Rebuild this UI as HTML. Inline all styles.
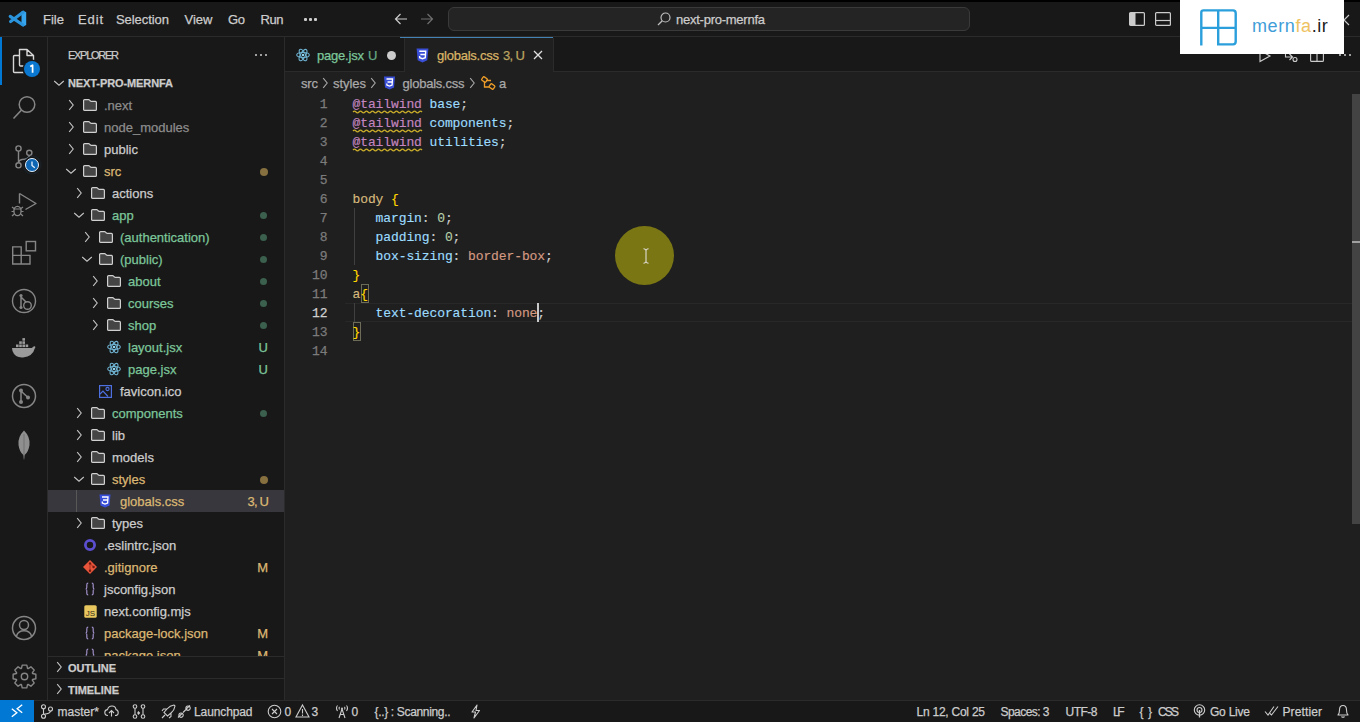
<!DOCTYPE html>
<html><head><meta charset="utf-8">
<style>
*{box-sizing:border-box;margin:0;padding:0}
html,body{width:1360px;height:722px;overflow:hidden;background:#1f1f1f;font-family:"Liberation Sans",sans-serif;font-size:13px;color:#cccccc;position:relative}
.a{position:absolute}
.t{position:absolute;white-space:pre;line-height:1;-webkit-text-stroke:0.25px currentColor}
svg{overflow:visible}
</style></head><body>
<div class="a" style="left:0px;top:0px;width:1360px;height:2px;background:#000;"></div>
<div class="a" style="left:0px;top:2px;width:1360px;height:34px;background:#181818;"></div>
<div class="a" style="left:0px;top:36px;width:1360px;height:1px;background:#2b2b2b;"></div>
<div class="a" style="left:0px;top:37px;width:47px;height:663px;background:#181818;"></div>
<div class="a" style="left:47px;top:37px;width:1px;height:663px;background:#2b2b2b;"></div>
<div class="a" style="left:48px;top:37px;width:236px;height:663px;background:#181818;"></div>
<div class="a" style="left:284px;top:37px;width:1px;height:663px;background:#2b2b2b;"></div>
<div class="a" style="left:285px;top:37px;width:1075px;height:34px;background:#181818;"></div>
<div class="a" style="left:285px;top:71px;width:1075px;height:1px;background:#2b2b2b;"></div>
<div class="a" style="left:285px;top:72px;width:1075px;height:628px;background:#1f1f1f;"></div>
<div class="a" style="left:0px;top:700px;width:1360px;height:22px;background:#181818;"></div>
<div class="a" style="left:0px;top:700px;width:1360px;height:1px;background:#2b2b2b;"></div>
<div class="t" style="left:43.00px;top:13.00px;font-size:13px;color:#cccccc;letter-spacing:0.016px;">File</div>
<div class="t" style="left:78.00px;top:13.00px;font-size:13px;color:#cccccc;letter-spacing:0.865px;">Edit</div>
<div class="t" style="left:116.00px;top:13.00px;font-size:13px;color:#cccccc;letter-spacing:-0.061px;">Selection</div>
<div class="t" style="left:184.50px;top:13.00px;font-size:13px;color:#cccccc;letter-spacing:0.016px;">View</div>
<div class="t" style="left:228.00px;top:13.00px;font-size:13px;color:#cccccc;letter-spacing:-0.344px;">Go</div>
<div class="t" style="left:260.50px;top:13.00px;font-size:13px;color:#cccccc;letter-spacing:-0.430px;">Run</div>
<svg class="a" style="left:0px;top:0px;" width="32" height="32" viewBox="0 0 32 32"><path d="M21.5,11.6 L23.3,10.8 L26.2,12.2 V25 L23.3,26.5 L21.5,25.6 Z" fill="#36a5ee"/><path d="M23,12.2 L10.6,21.6 M23,25 L10.2,16.4" stroke="#2a95dc" stroke-width="3.1" stroke-linecap="round"/></svg>
<div class="a" style="left:304px;top:18px;width:2.5px;height:2.5px;background:#cccccc;border-radius:1px"></div>
<div class="a" style="left:309px;top:18px;width:2.5px;height:2.5px;background:#cccccc;border-radius:1px"></div>
<div class="a" style="left:314px;top:18px;width:2.5px;height:2.5px;background:#cccccc;border-radius:1px"></div>
<svg class="a" style="left:394px;top:13px;" width="14" height="12" viewBox="0 0 14 12"><path d="M13,6 H1.5 M6.5,1 L1.5,6 L6.5,11" fill="none" stroke="#cccccc" stroke-width="1.2"/></svg>
<svg class="a" style="left:420px;top:13px;" width="14" height="12" viewBox="0 0 14 12"><path d="M1,6 H12.5 M7.5,1 L12.5,6 L7.5,11" fill="none" stroke="#6f6f6f" stroke-width="1.2"/></svg>
<div class="a" style="left:448px;top:7px;width:522px;height:24px;background:#242424;border:1px solid #3a3a3a;border-radius:6px"></div>
<svg class="a" style="left:657px;top:12px;" width="14" height="14" viewBox="0 0 14 14"><circle cx="8.5" cy="5.5" r="4.5" fill="none" stroke="#bdbdbd" stroke-width="1.2"/><path d="M5.3,8.7 L1,13" stroke="#bdbdbd" stroke-width="1.3"/></svg>
<div class="t" style="left:676.00px;top:13.00px;font-size:13px;color:#cccccc;letter-spacing:-0.249px;">next-pro-mernfa</div>
<svg class="a" style="left:1129px;top:12px;" width="16" height="14" viewBox="0 0 16 14"><rect x="0.6" y="0.6" width="14.8" height="12.8" rx="1" fill="none" stroke="#cccccc" stroke-width="1.2"/><rect x="1" y="1" width="5.5" height="12" fill="#cccccc"/></svg>
<svg class="a" style="left:1155px;top:12px;" width="16" height="14" viewBox="0 0 16 14"><rect x="0.6" y="0.6" width="14.8" height="12.8" rx="1" fill="none" stroke="#cccccc" stroke-width="1.2"/><path d="M1,8.5 H15" stroke="#cccccc" stroke-width="1.2"/></svg>
<svg class="a" style="left:1338px;top:14px;" width="11" height="11" viewBox="0 0 11 11"><path d="M1,1 L11,11 M11,1 L1,11" stroke="#cccccc" stroke-width="1.1"/></svg>
<div class="t" style="left:68.00px;top:50.19px;font-size:11px;color:#cccccc;letter-spacing:-1.275px;">EXPLORER</div>
<div class="a" style="left:255px;top:54px;width:2px;height:2px;background:#cccccc;border-radius:1px"></div>
<div class="a" style="left:260px;top:54px;width:2px;height:2px;background:#cccccc;border-radius:1px"></div>
<div class="a" style="left:265px;top:54px;width:2px;height:2px;background:#cccccc;border-radius:1px"></div>
<svg class="a" style="left:53px;top:79px;" width="12" height="8" viewBox="0 0 12 8"><path d="M1.2,2 L6,6.2 L10.8,2" fill="none" stroke="#c5c5c5" stroke-width="1.1"/></svg>
<div class="t" style="left:68.00px;top:78.19px;font-size:11px;color:#cccccc;letter-spacing:-0.096px;font-weight:700;">NEXT-PRO-MERNFA</div>
<svg class="a" style="left:67px;top:99px;" width="8" height="12" viewBox="0 0 8 12"><path d="M2.2,1.2 L6.2,6 L2.2,10.8" fill="none" stroke="#c5c5c5" stroke-width="1.1"/></svg>
<svg class="a" style="left:83px;top:99px;" width="14" height="12" viewBox="0 0 14 12"><path d="M0.6,1.6 Q0.6,0.6 1.6,0.6 H5.6 Q6.2,0.6 6.6,1.1 L7.4,2 Q7.7,2.4 8.3,2.4 H12.4 Q13.4,2.4 13.4,3.4 V10.4 Q13.4,11.4 12.4,11.4 H1.6 Q0.6,11.4 0.6,10.4 Z" fill="#454545" stroke="#d0d0d0" stroke-width="1.2"/></svg>
<div class="t" style="left:104.00px;top:99.00px;font-size:13px;color:#8c8c8c;">.next</div>
<svg class="a" style="left:67px;top:121px;" width="8" height="12" viewBox="0 0 8 12"><path d="M2.2,1.2 L6.2,6 L2.2,10.8" fill="none" stroke="#c5c5c5" stroke-width="1.1"/></svg>
<svg class="a" style="left:83px;top:121px;" width="14" height="12" viewBox="0 0 14 12"><path d="M0.6,1.6 Q0.6,0.6 1.6,0.6 H5.6 Q6.2,0.6 6.6,1.1 L7.4,2 Q7.7,2.4 8.3,2.4 H12.4 Q13.4,2.4 13.4,3.4 V10.4 Q13.4,11.4 12.4,11.4 H1.6 Q0.6,11.4 0.6,10.4 Z" fill="#454545" stroke="#d0d0d0" stroke-width="1.2"/></svg>
<div class="t" style="left:104.00px;top:121.00px;font-size:13px;color:#8c8c8c;">node_modules</div>
<svg class="a" style="left:67px;top:143px;" width="8" height="12" viewBox="0 0 8 12"><path d="M2.2,1.2 L6.2,6 L2.2,10.8" fill="none" stroke="#c5c5c5" stroke-width="1.1"/></svg>
<svg class="a" style="left:83px;top:143px;" width="14" height="12" viewBox="0 0 14 12"><path d="M0.6,1.6 Q0.6,0.6 1.6,0.6 H5.6 Q6.2,0.6 6.6,1.1 L7.4,2 Q7.7,2.4 8.3,2.4 H12.4 Q13.4,2.4 13.4,3.4 V10.4 Q13.4,11.4 12.4,11.4 H1.6 Q0.6,11.4 0.6,10.4 Z" fill="#454545" stroke="#d0d0d0" stroke-width="1.2"/></svg>
<div class="t" style="left:104.00px;top:143.00px;font-size:13px;color:#cccccc;">public</div>
<svg class="a" style="left:65px;top:167px;" width="12" height="8" viewBox="0 0 12 8"><path d="M1.2,2 L6,6.2 L10.8,2" fill="none" stroke="#c5c5c5" stroke-width="1.1"/></svg>
<svg class="a" style="left:83px;top:165px;" width="14" height="12" viewBox="0 0 14 12"><path d="M0.6,1.6 Q0.6,0.6 1.6,0.6 H5.6 Q6.2,0.6 6.6,1.1 L7.4,2 Q7.7,2.4 8.3,2.4 H12.4 Q13.4,2.4 13.4,3.4 V10.4 Q13.4,11.4 12.4,11.4 H1.6 Q0.6,11.4 0.6,10.4 Z" fill="#454545" stroke="#d0d0d0" stroke-width="1.2"/></svg>
<div class="t" style="left:104.00px;top:165.00px;font-size:13px;color:#dbb773;">src</div>
<div class="a" style="left:259.5px;top:167.5px;width:8px;height:8px;background:#86703f;border-radius:50%"></div>
<svg class="a" style="left:75px;top:187px;" width="8" height="12" viewBox="0 0 8 12"><path d="M2.2,1.2 L6.2,6 L2.2,10.8" fill="none" stroke="#c5c5c5" stroke-width="1.1"/></svg>
<svg class="a" style="left:91px;top:187px;" width="14" height="12" viewBox="0 0 14 12"><path d="M0.6,1.6 Q0.6,0.6 1.6,0.6 H5.6 Q6.2,0.6 6.6,1.1 L7.4,2 Q7.7,2.4 8.3,2.4 H12.4 Q13.4,2.4 13.4,3.4 V10.4 Q13.4,11.4 12.4,11.4 H1.6 Q0.6,11.4 0.6,10.4 Z" fill="#454545" stroke="#d0d0d0" stroke-width="1.2"/></svg>
<div class="t" style="left:112.00px;top:187.00px;font-size:13px;color:#cccccc;">actions</div>
<svg class="a" style="left:73px;top:211px;" width="12" height="8" viewBox="0 0 12 8"><path d="M1.2,2 L6,6.2 L10.8,2" fill="none" stroke="#c5c5c5" stroke-width="1.1"/></svg>
<svg class="a" style="left:91px;top:209px;" width="14" height="12" viewBox="0 0 14 12"><path d="M0.6,1.6 Q0.6,0.6 1.6,0.6 H5.6 Q6.2,0.6 6.6,1.1 L7.4,2 Q7.7,2.4 8.3,2.4 H12.4 Q13.4,2.4 13.4,3.4 V10.4 Q13.4,11.4 12.4,11.4 H1.6 Q0.6,11.4 0.6,10.4 Z" fill="#454545" stroke="#d0d0d0" stroke-width="1.2"/></svg>
<div class="t" style="left:112.00px;top:209.00px;font-size:13px;color:#7cc69a;">app</div>
<div class="a" style="left:260px;top:212px;width:7px;height:7px;background:#3b604d;border-radius:50%"></div>
<svg class="a" style="left:83px;top:231px;" width="8" height="12" viewBox="0 0 8 12"><path d="M2.2,1.2 L6.2,6 L2.2,10.8" fill="none" stroke="#c5c5c5" stroke-width="1.1"/></svg>
<svg class="a" style="left:99px;top:231px;" width="14" height="12" viewBox="0 0 14 12"><path d="M0.6,1.6 Q0.6,0.6 1.6,0.6 H5.6 Q6.2,0.6 6.6,1.1 L7.4,2 Q7.7,2.4 8.3,2.4 H12.4 Q13.4,2.4 13.4,3.4 V10.4 Q13.4,11.4 12.4,11.4 H1.6 Q0.6,11.4 0.6,10.4 Z" fill="#454545" stroke="#d0d0d0" stroke-width="1.2"/></svg>
<div class="t" style="left:120.00px;top:231.00px;font-size:13px;color:#7cc69a;">(authentication)</div>
<div class="a" style="left:260px;top:234px;width:7px;height:7px;background:#3b604d;border-radius:50%"></div>
<svg class="a" style="left:81px;top:255px;" width="12" height="8" viewBox="0 0 12 8"><path d="M1.2,2 L6,6.2 L10.8,2" fill="none" stroke="#c5c5c5" stroke-width="1.1"/></svg>
<svg class="a" style="left:99px;top:253px;" width="14" height="12" viewBox="0 0 14 12"><path d="M0.6,1.6 Q0.6,0.6 1.6,0.6 H5.6 Q6.2,0.6 6.6,1.1 L7.4,2 Q7.7,2.4 8.3,2.4 H12.4 Q13.4,2.4 13.4,3.4 V10.4 Q13.4,11.4 12.4,11.4 H1.6 Q0.6,11.4 0.6,10.4 Z" fill="#454545" stroke="#d0d0d0" stroke-width="1.2"/></svg>
<div class="t" style="left:120.00px;top:253.00px;font-size:13px;color:#7cc69a;">(public)</div>
<div class="a" style="left:260px;top:256px;width:7px;height:7px;background:#3b604d;border-radius:50%"></div>
<svg class="a" style="left:91px;top:275px;" width="8" height="12" viewBox="0 0 8 12"><path d="M2.2,1.2 L6.2,6 L2.2,10.8" fill="none" stroke="#c5c5c5" stroke-width="1.1"/></svg>
<svg class="a" style="left:107px;top:275px;" width="14" height="12" viewBox="0 0 14 12"><path d="M0.6,1.6 Q0.6,0.6 1.6,0.6 H5.6 Q6.2,0.6 6.6,1.1 L7.4,2 Q7.7,2.4 8.3,2.4 H12.4 Q13.4,2.4 13.4,3.4 V10.4 Q13.4,11.4 12.4,11.4 H1.6 Q0.6,11.4 0.6,10.4 Z" fill="#454545" stroke="#d0d0d0" stroke-width="1.2"/></svg>
<div class="t" style="left:128.00px;top:275.00px;font-size:13px;color:#7cc69a;">about</div>
<div class="a" style="left:260px;top:278px;width:7px;height:7px;background:#3b604d;border-radius:50%"></div>
<svg class="a" style="left:91px;top:297px;" width="8" height="12" viewBox="0 0 8 12"><path d="M2.2,1.2 L6.2,6 L2.2,10.8" fill="none" stroke="#c5c5c5" stroke-width="1.1"/></svg>
<svg class="a" style="left:107px;top:297px;" width="14" height="12" viewBox="0 0 14 12"><path d="M0.6,1.6 Q0.6,0.6 1.6,0.6 H5.6 Q6.2,0.6 6.6,1.1 L7.4,2 Q7.7,2.4 8.3,2.4 H12.4 Q13.4,2.4 13.4,3.4 V10.4 Q13.4,11.4 12.4,11.4 H1.6 Q0.6,11.4 0.6,10.4 Z" fill="#454545" stroke="#d0d0d0" stroke-width="1.2"/></svg>
<div class="t" style="left:128.00px;top:297.00px;font-size:13px;color:#7cc69a;">courses</div>
<div class="a" style="left:260px;top:300px;width:7px;height:7px;background:#3b604d;border-radius:50%"></div>
<svg class="a" style="left:91px;top:319px;" width="8" height="12" viewBox="0 0 8 12"><path d="M2.2,1.2 L6.2,6 L2.2,10.8" fill="none" stroke="#c5c5c5" stroke-width="1.1"/></svg>
<svg class="a" style="left:107px;top:319px;" width="14" height="12" viewBox="0 0 14 12"><path d="M0.6,1.6 Q0.6,0.6 1.6,0.6 H5.6 Q6.2,0.6 6.6,1.1 L7.4,2 Q7.7,2.4 8.3,2.4 H12.4 Q13.4,2.4 13.4,3.4 V10.4 Q13.4,11.4 12.4,11.4 H1.6 Q0.6,11.4 0.6,10.4 Z" fill="#454545" stroke="#d0d0d0" stroke-width="1.2"/></svg>
<div class="t" style="left:128.00px;top:319.00px;font-size:13px;color:#7cc69a;">shop</div>
<div class="a" style="left:260px;top:322px;width:7px;height:7px;background:#3b604d;border-radius:50%"></div>
<svg class="a" style="left:107px;top:340px;" width="14" height="14" viewBox="0 0 14 14"><g fill="none" stroke="#6fb3d2" stroke-width="1.1"><ellipse cx="7" cy="7" rx="6.3" ry="2.5"/><ellipse cx="7" cy="7" rx="6.3" ry="2.5" transform="rotate(60 7 7)"/><ellipse cx="7" cy="7" rx="6.3" ry="2.5" transform="rotate(120 7 7)"/></g><circle cx="7" cy="7" r="1.3" fill="#8fd3f0"/></svg>
<div class="t" style="left:128.00px;top:341.00px;font-size:13px;color:#7cc69a;">layout.jsx</div>
<div class="t" style="left:258.61px;top:341.00px;font-size:13px;color:#7cc69a;">U</div>
<svg class="a" style="left:107px;top:362px;" width="14" height="14" viewBox="0 0 14 14"><g fill="none" stroke="#6fb3d2" stroke-width="1.1"><ellipse cx="7" cy="7" rx="6.3" ry="2.5"/><ellipse cx="7" cy="7" rx="6.3" ry="2.5" transform="rotate(60 7 7)"/><ellipse cx="7" cy="7" rx="6.3" ry="2.5" transform="rotate(120 7 7)"/></g><circle cx="7" cy="7" r="1.3" fill="#8fd3f0"/></svg>
<div class="t" style="left:128.00px;top:363.00px;font-size:13px;color:#7cc69a;">page.jsx</div>
<div class="t" style="left:258.61px;top:363.00px;font-size:13px;color:#7cc69a;">U</div>
<svg class="a" style="left:99px;top:385px;" width="13" height="13" viewBox="0 0 13 13"><rect x="0.6" y="0.6" width="11.8" height="11.8" fill="none" stroke="#4d6fe0" stroke-width="1.2"/><path d="M1,9 L4,6 L9,11.5" fill="none" stroke="#4d6fe0" stroke-width="1.2"/><circle cx="8.5" cy="4" r="1.6" fill="none" stroke="#4d6fe0" stroke-width="1.1"/></svg>
<div class="t" style="left:120.00px;top:385.00px;font-size:13px;color:#cccccc;">favicon.ico</div>
<svg class="a" style="left:75px;top:407px;" width="8" height="12" viewBox="0 0 8 12"><path d="M2.2,1.2 L6.2,6 L2.2,10.8" fill="none" stroke="#c5c5c5" stroke-width="1.1"/></svg>
<svg class="a" style="left:91px;top:407px;" width="14" height="12" viewBox="0 0 14 12"><path d="M0.6,1.6 Q0.6,0.6 1.6,0.6 H5.6 Q6.2,0.6 6.6,1.1 L7.4,2 Q7.7,2.4 8.3,2.4 H12.4 Q13.4,2.4 13.4,3.4 V10.4 Q13.4,11.4 12.4,11.4 H1.6 Q0.6,11.4 0.6,10.4 Z" fill="#454545" stroke="#d0d0d0" stroke-width="1.2"/></svg>
<div class="t" style="left:112.00px;top:407.00px;font-size:13px;color:#7cc69a;">components</div>
<div class="a" style="left:260px;top:410px;width:7px;height:7px;background:#3b604d;border-radius:50%"></div>
<svg class="a" style="left:75px;top:429px;" width="8" height="12" viewBox="0 0 8 12"><path d="M2.2,1.2 L6.2,6 L2.2,10.8" fill="none" stroke="#c5c5c5" stroke-width="1.1"/></svg>
<svg class="a" style="left:91px;top:429px;" width="14" height="12" viewBox="0 0 14 12"><path d="M0.6,1.6 Q0.6,0.6 1.6,0.6 H5.6 Q6.2,0.6 6.6,1.1 L7.4,2 Q7.7,2.4 8.3,2.4 H12.4 Q13.4,2.4 13.4,3.4 V10.4 Q13.4,11.4 12.4,11.4 H1.6 Q0.6,11.4 0.6,10.4 Z" fill="#454545" stroke="#d0d0d0" stroke-width="1.2"/></svg>
<div class="t" style="left:112.00px;top:429.00px;font-size:13px;color:#cccccc;">lib</div>
<svg class="a" style="left:75px;top:451px;" width="8" height="12" viewBox="0 0 8 12"><path d="M2.2,1.2 L6.2,6 L2.2,10.8" fill="none" stroke="#c5c5c5" stroke-width="1.1"/></svg>
<svg class="a" style="left:91px;top:451px;" width="14" height="12" viewBox="0 0 14 12"><path d="M0.6,1.6 Q0.6,0.6 1.6,0.6 H5.6 Q6.2,0.6 6.6,1.1 L7.4,2 Q7.7,2.4 8.3,2.4 H12.4 Q13.4,2.4 13.4,3.4 V10.4 Q13.4,11.4 12.4,11.4 H1.6 Q0.6,11.4 0.6,10.4 Z" fill="#454545" stroke="#d0d0d0" stroke-width="1.2"/></svg>
<div class="t" style="left:112.00px;top:451.00px;font-size:13px;color:#cccccc;">models</div>
<svg class="a" style="left:73px;top:475px;" width="12" height="8" viewBox="0 0 12 8"><path d="M1.2,2 L6,6.2 L10.8,2" fill="none" stroke="#c5c5c5" stroke-width="1.1"/></svg>
<svg class="a" style="left:91px;top:473px;" width="14" height="12" viewBox="0 0 14 12"><path d="M0.6,1.6 Q0.6,0.6 1.6,0.6 H5.6 Q6.2,0.6 6.6,1.1 L7.4,2 Q7.7,2.4 8.3,2.4 H12.4 Q13.4,2.4 13.4,3.4 V10.4 Q13.4,11.4 12.4,11.4 H1.6 Q0.6,11.4 0.6,10.4 Z" fill="#454545" stroke="#d0d0d0" stroke-width="1.2"/></svg>
<div class="t" style="left:112.00px;top:473.00px;font-size:13px;color:#dbb773;">styles</div>
<div class="a" style="left:259.5px;top:475.5px;width:8px;height:8px;background:#86703f;border-radius:50%"></div>
<div class="a" style="left:48px;top:490px;width:236px;height:22px;background:#37373d;"></div>
<div class="a" style="left:76px;top:490px;width:1px;height:22px;background:#585858;"></div>
<svg class="a" style="left:99px;top:494px;" width="12" height="14" viewBox="0 0 12 14"><path d="M0.5,0.5 H11.5 L10.5,11.5 L6,13.5 L1.5,11.5 Z" fill="#3a4fd8"/><path d="M3,3 H9 L8.6,9 L6,10 L3.4,9 L3.3,7.5 M4,6 H8.6" fill="none" stroke="#ffffff" stroke-width="1.3"/></svg>
<div class="t" style="left:120.00px;top:495.00px;font-size:13px;color:#dbb773;">globals.css</div>
<div class="t" style="left:247.50px;top:495.00px;font-size:13px;color:#dbb773;letter-spacing:-0.781px;">3, U</div>
<svg class="a" style="left:75px;top:517px;" width="8" height="12" viewBox="0 0 8 12"><path d="M2.2,1.2 L6.2,6 L2.2,10.8" fill="none" stroke="#c5c5c5" stroke-width="1.1"/></svg>
<svg class="a" style="left:91px;top:517px;" width="14" height="12" viewBox="0 0 14 12"><path d="M0.6,1.6 Q0.6,0.6 1.6,0.6 H5.6 Q6.2,0.6 6.6,1.1 L7.4,2 Q7.7,2.4 8.3,2.4 H12.4 Q13.4,2.4 13.4,3.4 V10.4 Q13.4,11.4 12.4,11.4 H1.6 Q0.6,11.4 0.6,10.4 Z" fill="#454545" stroke="#d0d0d0" stroke-width="1.2"/></svg>
<div class="t" style="left:112.00px;top:517.00px;font-size:13px;color:#cccccc;">types</div>
<svg class="a" style="left:83px;top:538px;" width="14" height="14" viewBox="0 0 14 14"><circle cx="7" cy="7" r="4.6" fill="none" stroke="#5b4fd0" stroke-width="2.8"/></svg>
<div class="t" style="left:104.00px;top:539.00px;font-size:13px;color:#cccccc;">.eslintrc.json</div>
<svg class="a" style="left:83px;top:560px;" width="14" height="14" viewBox="0 0 14 14"><path d="M7,0 L14,7 L7,14 L0,7 Z" fill="#e8553a"/><path d="M7,3.4 V10.8 M7,3.4 L10.6,7" stroke="#a83020" stroke-width="1"/><circle cx="7" cy="3.4" r="1.2" fill="#701a10"/><circle cx="7" cy="10.8" r="1.2" fill="#701a10"/><circle cx="10.6" cy="7" r="1.2" fill="#701a10"/></svg>
<div class="t" style="left:104.00px;top:561.00px;font-size:13px;color:#dbb773;">.gitignore</div>
<div class="t" style="left:257.16px;top:561.00px;font-size:13px;color:#dbb773;">M</div>
<svg class="a" style="left:83px;top:582px;" width="14" height="14" viewBox="0 0 14 14"><path d="M5.2,1.2 Q3.8,1.2 3.8,2.8 V5.2 Q3.8,7 2.6,7 Q3.8,7 3.8,8.8 V11.2 Q3.8,12.8 5.2,12.8 M8.8,1.2 Q10.2,1.2 10.2,2.8 V5.2 Q10.2,7 11.4,7 Q10.2,7 10.2,8.8 V11.2 Q10.2,12.8 8.8,12.8" fill="none" stroke="#a08fc8" stroke-width="1.2"/></svg>
<div class="t" style="left:104.00px;top:583.00px;font-size:13px;color:#cccccc;">jsconfig.json</div>
<svg class="a" style="left:84px;top:605px;" width="13" height="13" viewBox="0 0 13 13"><rect x="0.3" y="0.3" width="12.4" height="12.4" rx="1.5" fill="#e9c75f"/><text x="6.5" y="10.6" font-family="Liberation Sans" font-size="8" fill="#2f2a1c" text-anchor="middle">JS</text></svg>
<div class="t" style="left:104.00px;top:605.00px;font-size:13px;color:#cccccc;">next.config.mjs</div>
<svg class="a" style="left:83px;top:626px;" width="14" height="14" viewBox="0 0 14 14"><path d="M5.2,1.2 Q3.8,1.2 3.8,2.8 V5.2 Q3.8,7 2.6,7 Q3.8,7 3.8,8.8 V11.2 Q3.8,12.8 5.2,12.8 M8.8,1.2 Q10.2,1.2 10.2,2.8 V5.2 Q10.2,7 11.4,7 Q10.2,7 10.2,8.8 V11.2 Q10.2,12.8 8.8,12.8" fill="none" stroke="#a08fc8" stroke-width="1.2"/></svg>
<div class="t" style="left:104.00px;top:627.00px;font-size:13px;color:#dbb773;">package-lock.json</div>
<div class="t" style="left:257.16px;top:627.00px;font-size:13px;color:#dbb773;">M</div>
<svg class="a" style="left:83px;top:648px;" width="14" height="14" viewBox="0 0 14 14"><path d="M5.2,1.2 Q3.8,1.2 3.8,2.8 V5.2 Q3.8,7 2.6,7 Q3.8,7 3.8,8.8 V11.2 Q3.8,12.8 5.2,12.8 M8.8,1.2 Q10.2,1.2 10.2,2.8 V5.2 Q10.2,7 11.4,7 Q10.2,7 10.2,8.8 V11.2 Q10.2,12.8 8.8,12.8" fill="none" stroke="#a08fc8" stroke-width="1.2"/></svg>
<div class="t" style="left:104.00px;top:649.00px;font-size:13px;color:#dbb773;">package.json</div>
<div class="t" style="left:257.16px;top:649.00px;font-size:13px;color:#dbb773;">M</div>
<div class="a" style="left:48px;top:656px;width:236px;height:44px;background:#181818;"></div>
<div class="a" style="left:48px;top:656px;width:236px;height:1px;background:#2b2b2b;"></div>
<div class="a" style="left:48px;top:678px;width:236px;height:1px;background:#2b2b2b;"></div>
<svg class="a" style="left:55px;top:661px;" width="8" height="12" viewBox="0 0 8 12"><path d="M2.2,1.2 L6.2,6 L2.2,10.8" fill="none" stroke="#c5c5c5" stroke-width="1.1"/></svg>
<svg class="a" style="left:55px;top:683px;" width="8" height="12" viewBox="0 0 8 12"><path d="M2.2,1.2 L6.2,6 L2.2,10.8" fill="none" stroke="#c5c5c5" stroke-width="1.1"/></svg>
<div class="t" style="left:68.00px;top:662.69px;font-size:11px;color:#cccccc;letter-spacing:-0.047px;font-weight:700;">OUTLINE</div>
<div class="t" style="left:68.00px;top:684.69px;font-size:11px;color:#cccccc;letter-spacing:-0.049px;font-weight:700;">TIMELINE</div>
<div class="a" style="left:285px;top:37px;width:119px;height:34px;background:#181818;"></div>
<div class="a" style="left:404px;top:38px;width:1px;height:34px;background:#2b2b2b;"></div>
<div class="a" style="left:405px;top:38px;width:148px;height:34px;background:#1f1f1f;"></div>
<div class="a" style="left:400px;top:37px;width:153px;height:1px;background:#4382b4;"></div>
<div class="a" style="left:553px;top:38px;width:1px;height:34px;background:#2b2b2b;"></div>
<svg class="a" style="left:296px;top:48px;" width="14" height="14" viewBox="0 0 14 14"><g fill="none" stroke="#6fb3d2" stroke-width="1.1"><ellipse cx="7" cy="7" rx="6.3" ry="2.5"/><ellipse cx="7" cy="7" rx="6.3" ry="2.5" transform="rotate(60 7 7)"/><ellipse cx="7" cy="7" rx="6.3" ry="2.5" transform="rotate(120 7 7)"/></g><circle cx="7" cy="7" r="1.3" fill="#8fd3f0"/></svg>
<div class="t" style="left:317.00px;top:48.50px;font-size:13px;color:#7cc69a;letter-spacing:-0.203px;">page.jsx</div>
<div class="t" style="left:368.00px;top:48.50px;font-size:13px;color:#64a985;">U</div>
<div class="a" style="left:386.5px;top:50.5px;width:9px;height:9px;background:#cccccc;border-radius:50%"></div>
<svg class="a" style="left:416px;top:48px;" width="13" height="15" viewBox="0 0 12 14"><path d="M0.5,0.5 H11.5 L10.5,11.5 L6,13.5 L1.5,11.5 Z" fill="#3a4fd8"/><path d="M3,3 H9 L8.6,9 L6,10 L3.4,9 L3.3,7.5 M4,6 H8.6" fill="none" stroke="#ffffff" stroke-width="1.3"/></svg>
<div class="t" style="left:437.00px;top:48.50px;font-size:13px;color:#d9b466;letter-spacing:-0.231px;">globals.css</div>
<div class="t" style="left:503.00px;top:48.50px;font-size:13px;color:#bba45f;letter-spacing:-0.615px;">3, U</div>
<svg class="a" style="left:533px;top:50px;" width="10" height="10" viewBox="0 0 10 10"><path d="M1,1 L9,9 M9,1 L1,9" stroke="#e0e0e0" stroke-width="1.3"/></svg>
<svg class="a" style="left:1258px;top:48.5px;" width="14" height="14" viewBox="0 0 14 14"><path d="M2,1.5 L12,7 L2,12.5 Z" fill="none" stroke="#cccccc" stroke-width="1.1"/></svg>
<svg class="a" style="left:1284px;top:48.5px;" width="14" height="14" viewBox="0 0 14 14"><path d="M1.5,1 V8 H8 M5.5,5 L8.5,8 L5.5,11" fill="none" stroke="#cccccc" stroke-width="1.1"/><circle cx="11" cy="10.5" r="2" fill="none" stroke="#cccccc" stroke-width="1.1"/></svg>
<svg class="a" style="left:1310px;top:48.5px;" width="14" height="14" viewBox="0 0 14 14"><rect x="0.6" y="0.6" width="12.8" height="11.8" rx="1" fill="none" stroke="#cccccc" stroke-width="1.1"/><path d="M7,1 V12" stroke="#cccccc" stroke-width="1.1"/></svg>
<div class="a" style="left:1339px;top:54px;width:2px;height:2px;background:#cccccc;border-radius:1px"></div>
<div class="a" style="left:1344px;top:54px;width:2px;height:2px;background:#cccccc;border-radius:1px"></div>
<div class="a" style="left:1349px;top:54px;width:2px;height:2px;background:#cccccc;border-radius:1px"></div>
<div class="t" style="left:301.00px;top:77.00px;font-size:13px;color:#a9a9a9;letter-spacing:-0.172px;">src</div>
<svg class="a" style="left:321px;top:77px;" width="8" height="12" viewBox="0 0 8 12"><path d="M2.2,1.2 L6.2,6 L2.2,10.8" fill="none" stroke="#a9a9a9" stroke-width="1.1"/></svg>
<div class="t" style="left:333.00px;top:77.00px;font-size:13px;color:#a9a9a9;letter-spacing:-0.047px;">styles</div>
<svg class="a" style="left:369px;top:77px;" width="8" height="12" viewBox="0 0 8 12"><path d="M2.2,1.2 L6.2,6 L2.2,10.8" fill="none" stroke="#a9a9a9" stroke-width="1.1"/></svg>
<svg class="a" style="left:383px;top:76px;" width="13" height="14" viewBox="0 0 12 14"><path d="M0.5,0.5 H11.5 L10.5,11.5 L6,13.5 L1.5,11.5 Z" fill="#3a4fd8"/><path d="M3,3 H9 L8.6,9 L6,10 L3.4,9 L3.3,7.5 M4,6 H8.6" fill="none" stroke="#ffffff" stroke-width="1.3"/></svg>
<div class="t" style="left:402.50px;top:77.00px;font-size:13px;color:#a9a9a9;letter-spacing:-0.231px;">globals.css</div>
<svg class="a" style="left:468px;top:77px;" width="8" height="12" viewBox="0 0 8 12"><path d="M2.2,1.2 L6.2,6 L2.2,10.8" fill="none" stroke="#a9a9a9" stroke-width="1.1"/></svg>
<svg class="a" style="left:481px;top:76px;" width="15" height="14" viewBox="0 0 15 14"><rect x="1" y="1.5" width="5" height="4" rx="0.8" transform="rotate(35 3.5 3.5)" fill="none" stroke="#ee9d28" stroke-width="1.3"/><rect x="8.5" y="8.5" width="5" height="4" rx="0.8" transform="rotate(35 11 10.5)" fill="none" stroke="#ee9d28" stroke-width="1.3"/><path d="M5,4.5 H10 M3.5,6 V11 H8" fill="none" stroke="#ee9d28" stroke-width="1.3"/></svg>
<div class="t" style="left:499.00px;top:77.00px;font-size:13px;color:#a9a9a9;">a</div>
<div class="a" style="left:345px;top:303px;width:1007px;height:19px;background:transparent;border-top:1px solid #282828;border-bottom:1px solid #282828"></div>
<div class="a" style="left:354px;top:208px;width:1px;height:57px;background:#404040;"></div>
<div class="a" style="left:354px;top:303px;width:1px;height:19px;background:#404040;"></div>
<div class="a" style="left:361px;top:284px;width:8px;height:19px;background:transparent;border:1px solid #6c6c58"></div>
<div class="a" style="left:353px;top:322px;width:8px;height:19px;background:transparent;border:1px solid #6c6c58"></div>
<div class="t" style="left:319.69px;top:98.04px;font-size:13px;color:#7b7b7b;font-family:'Liberation Mono',monospace;">1</div>
<div class="t" style="left:352.50px;top:98.04px;font-size:13px;color:#c586c0;font-family:'Liberation Mono',monospace;letter-spacing:-0.1px;-webkit-text-stroke:0.15px currentColor">@tailwind</div>
<div class="t" style="left:429.50px;top:98.04px;font-size:13px;color:#9cdcfe;font-family:'Liberation Mono',monospace;letter-spacing:-0.1px;-webkit-text-stroke:0.15px currentColor">base</div>
<div class="t" style="left:460.30px;top:98.04px;font-size:13px;color:#cccccc;font-family:'Liberation Mono',monospace;letter-spacing:-0.1px;-webkit-text-stroke:0.15px currentColor">;</div>
<div class="t" style="left:319.69px;top:117.04px;font-size:13px;color:#7b7b7b;font-family:'Liberation Mono',monospace;">2</div>
<div class="t" style="left:352.50px;top:117.04px;font-size:13px;color:#c586c0;font-family:'Liberation Mono',monospace;letter-spacing:-0.1px;-webkit-text-stroke:0.15px currentColor">@tailwind</div>
<div class="t" style="left:429.50px;top:117.04px;font-size:13px;color:#9cdcfe;font-family:'Liberation Mono',monospace;letter-spacing:-0.1px;-webkit-text-stroke:0.15px currentColor">components</div>
<div class="t" style="left:506.50px;top:117.04px;font-size:13px;color:#cccccc;font-family:'Liberation Mono',monospace;letter-spacing:-0.1px;-webkit-text-stroke:0.15px currentColor">;</div>
<div class="t" style="left:319.69px;top:136.04px;font-size:13px;color:#7b7b7b;font-family:'Liberation Mono',monospace;">3</div>
<div class="t" style="left:352.50px;top:136.04px;font-size:13px;color:#c586c0;font-family:'Liberation Mono',monospace;letter-spacing:-0.1px;-webkit-text-stroke:0.15px currentColor">@tailwind</div>
<div class="t" style="left:429.50px;top:136.04px;font-size:13px;color:#9cdcfe;font-family:'Liberation Mono',monospace;letter-spacing:-0.1px;-webkit-text-stroke:0.15px currentColor">utilities</div>
<div class="t" style="left:498.80px;top:136.04px;font-size:13px;color:#cccccc;font-family:'Liberation Mono',monospace;letter-spacing:-0.1px;-webkit-text-stroke:0.15px currentColor">;</div>
<div class="t" style="left:319.69px;top:155.04px;font-size:13px;color:#7b7b7b;font-family:'Liberation Mono',monospace;">4</div>
<div class="t" style="left:319.69px;top:174.04px;font-size:13px;color:#7b7b7b;font-family:'Liberation Mono',monospace;">5</div>
<div class="t" style="left:319.69px;top:193.04px;font-size:13px;color:#7b7b7b;font-family:'Liberation Mono',monospace;">6</div>
<div class="t" style="left:352.50px;top:193.04px;font-size:13px;color:#d7ba7d;font-family:'Liberation Mono',monospace;letter-spacing:-0.1px;-webkit-text-stroke:0.15px currentColor">body</div>
<div class="t" style="left:391.00px;top:193.04px;font-size:13px;color:#ffd700;font-family:'Liberation Mono',monospace;letter-spacing:-0.1px;-webkit-text-stroke:0.15px currentColor">{</div>
<div class="t" style="left:319.69px;top:212.04px;font-size:13px;color:#7b7b7b;font-family:'Liberation Mono',monospace;">7</div>
<div class="t" style="left:375.60px;top:212.04px;font-size:13px;color:#9cdcfe;font-family:'Liberation Mono',monospace;letter-spacing:-0.1px;-webkit-text-stroke:0.15px currentColor">margin</div>
<div class="t" style="left:421.80px;top:212.04px;font-size:13px;color:#cccccc;font-family:'Liberation Mono',monospace;letter-spacing:-0.1px;-webkit-text-stroke:0.15px currentColor">: </div>
<div class="t" style="left:437.20px;top:212.04px;font-size:13px;color:#b5cea8;font-family:'Liberation Mono',monospace;letter-spacing:-0.1px;-webkit-text-stroke:0.15px currentColor">0</div>
<div class="t" style="left:444.90px;top:212.04px;font-size:13px;color:#cccccc;font-family:'Liberation Mono',monospace;letter-spacing:-0.1px;-webkit-text-stroke:0.15px currentColor">;</div>
<div class="t" style="left:319.69px;top:231.04px;font-size:13px;color:#7b7b7b;font-family:'Liberation Mono',monospace;">8</div>
<div class="t" style="left:375.60px;top:231.04px;font-size:13px;color:#9cdcfe;font-family:'Liberation Mono',monospace;letter-spacing:-0.1px;-webkit-text-stroke:0.15px currentColor">padding</div>
<div class="t" style="left:429.50px;top:231.04px;font-size:13px;color:#cccccc;font-family:'Liberation Mono',monospace;letter-spacing:-0.1px;-webkit-text-stroke:0.15px currentColor">: </div>
<div class="t" style="left:444.90px;top:231.04px;font-size:13px;color:#b5cea8;font-family:'Liberation Mono',monospace;letter-spacing:-0.1px;-webkit-text-stroke:0.15px currentColor">0</div>
<div class="t" style="left:452.60px;top:231.04px;font-size:13px;color:#cccccc;font-family:'Liberation Mono',monospace;letter-spacing:-0.1px;-webkit-text-stroke:0.15px currentColor">;</div>
<div class="t" style="left:319.69px;top:250.04px;font-size:13px;color:#7b7b7b;font-family:'Liberation Mono',monospace;">9</div>
<div class="t" style="left:375.60px;top:250.04px;font-size:13px;color:#9cdcfe;font-family:'Liberation Mono',monospace;letter-spacing:-0.1px;-webkit-text-stroke:0.15px currentColor">box-sizing</div>
<div class="t" style="left:452.60px;top:250.04px;font-size:13px;color:#cccccc;font-family:'Liberation Mono',monospace;letter-spacing:-0.1px;-webkit-text-stroke:0.15px currentColor">: </div>
<div class="t" style="left:468.00px;top:250.04px;font-size:13px;color:#d49a82;font-family:'Liberation Mono',monospace;letter-spacing:-0.1px;-webkit-text-stroke:0.15px currentColor">border-box</div>
<div class="t" style="left:545.00px;top:250.04px;font-size:13px;color:#cccccc;font-family:'Liberation Mono',monospace;letter-spacing:-0.1px;-webkit-text-stroke:0.15px currentColor">;</div>
<div class="t" style="left:311.89px;top:269.04px;font-size:13px;color:#7b7b7b;font-family:'Liberation Mono',monospace;">10</div>
<div class="t" style="left:352.50px;top:269.04px;font-size:13px;color:#ffd700;font-family:'Liberation Mono',monospace;letter-spacing:-0.1px;-webkit-text-stroke:0.15px currentColor">}</div>
<div class="t" style="left:311.89px;top:288.04px;font-size:13px;color:#7b7b7b;font-family:'Liberation Mono',monospace;">11</div>
<div class="t" style="left:352.50px;top:288.04px;font-size:13px;color:#d7ba7d;font-family:'Liberation Mono',monospace;letter-spacing:-0.1px;-webkit-text-stroke:0.15px currentColor">a</div>
<div class="t" style="left:360.20px;top:288.04px;font-size:13px;color:#ffd700;font-family:'Liberation Mono',monospace;letter-spacing:-0.1px;-webkit-text-stroke:0.15px currentColor">{</div>
<div class="t" style="left:311.89px;top:307.04px;font-size:13px;color:#d0d0d0;font-family:'Liberation Mono',monospace;">12</div>
<div class="t" style="left:375.60px;top:307.04px;font-size:13px;color:#9cdcfe;font-family:'Liberation Mono',monospace;letter-spacing:-0.1px;-webkit-text-stroke:0.15px currentColor">text-decoration</div>
<div class="t" style="left:491.10px;top:307.04px;font-size:13px;color:#cccccc;font-family:'Liberation Mono',monospace;letter-spacing:-0.1px;-webkit-text-stroke:0.15px currentColor">: </div>
<div class="t" style="left:506.50px;top:307.04px;font-size:13px;color:#d49a82;font-family:'Liberation Mono',monospace;letter-spacing:-0.1px;-webkit-text-stroke:0.15px currentColor">none</div>
<div class="t" style="left:537.30px;top:307.04px;font-size:13px;color:#cccccc;font-family:'Liberation Mono',monospace;letter-spacing:-0.1px;-webkit-text-stroke:0.15px currentColor">;</div>
<div class="t" style="left:311.89px;top:326.04px;font-size:13px;color:#7b7b7b;font-family:'Liberation Mono',monospace;">13</div>
<div class="t" style="left:352.50px;top:326.04px;font-size:13px;color:#ffd700;font-family:'Liberation Mono',monospace;letter-spacing:-0.1px;-webkit-text-stroke:0.15px currentColor">}</div>
<div class="t" style="left:311.89px;top:345.04px;font-size:13px;color:#7b7b7b;font-family:'Liberation Mono',monospace;">14</div>
<svg class="a" style="left:353px;top:109.6px;" width="69" height="4" viewBox="0 0 69 4"><path d="M0,2 Q1.5,0.2 3.0,2 Q4.5,3.8 6.0,2 Q7.5,0.2 9.0,2 Q10.5,3.8 12.0,2 Q13.5,0.2 15.0,2 Q16.5,3.8 18.0,2 Q19.5,0.2 21.0,2 Q22.5,3.8 24.0,2 Q25.5,0.2 27.0,2 Q28.5,3.8 30.0,2 Q31.5,0.2 33.0,2 Q34.5,3.8 36.0,2 Q37.5,0.2 39.0,2 Q40.5,3.8 42.0,2 Q43.5,0.2 45.0,2 Q46.5,3.8 48.0,2 Q49.5,0.2 51.0,2 Q52.5,3.8 54.0,2 Q55.5,0.2 57.0,2 Q58.5,3.8 60.0,2 Q61.5,0.2 63.0,2 Q64.5,3.8 66.0,2 Q67.5,0.2 69.0,2" fill="none" stroke="#c9ad2a" stroke-width="1.2"/></svg>
<svg class="a" style="left:353px;top:128.6px;" width="69" height="4" viewBox="0 0 69 4"><path d="M0,2 Q1.5,0.2 3.0,2 Q4.5,3.8 6.0,2 Q7.5,0.2 9.0,2 Q10.5,3.8 12.0,2 Q13.5,0.2 15.0,2 Q16.5,3.8 18.0,2 Q19.5,0.2 21.0,2 Q22.5,3.8 24.0,2 Q25.5,0.2 27.0,2 Q28.5,3.8 30.0,2 Q31.5,0.2 33.0,2 Q34.5,3.8 36.0,2 Q37.5,0.2 39.0,2 Q40.5,3.8 42.0,2 Q43.5,0.2 45.0,2 Q46.5,3.8 48.0,2 Q49.5,0.2 51.0,2 Q52.5,3.8 54.0,2 Q55.5,0.2 57.0,2 Q58.5,3.8 60.0,2 Q61.5,0.2 63.0,2 Q64.5,3.8 66.0,2 Q67.5,0.2 69.0,2" fill="none" stroke="#c9ad2a" stroke-width="1.2"/></svg>
<svg class="a" style="left:353px;top:147.6px;" width="69" height="4" viewBox="0 0 69 4"><path d="M0,2 Q1.5,0.2 3.0,2 Q4.5,3.8 6.0,2 Q7.5,0.2 9.0,2 Q10.5,3.8 12.0,2 Q13.5,0.2 15.0,2 Q16.5,3.8 18.0,2 Q19.5,0.2 21.0,2 Q22.5,3.8 24.0,2 Q25.5,0.2 27.0,2 Q28.5,3.8 30.0,2 Q31.5,0.2 33.0,2 Q34.5,3.8 36.0,2 Q37.5,0.2 39.0,2 Q40.5,3.8 42.0,2 Q43.5,0.2 45.0,2 Q46.5,3.8 48.0,2 Q49.5,0.2 51.0,2 Q52.5,3.8 54.0,2 Q55.5,0.2 57.0,2 Q58.5,3.8 60.0,2 Q61.5,0.2 63.0,2 Q64.5,3.8 66.0,2 Q67.5,0.2 69.0,2" fill="none" stroke="#c9ad2a" stroke-width="1.2"/></svg>
<div class="a" style="left:537px;top:303px;width:2px;height:19px;background:#c8c8c8;"></div>
<div class="a" style="left:1352px;top:94px;width:8px;height:430px;background:#434343;"></div>
<div class="a" style="left:1352px;top:241px;width:8px;height:2px;background:#a0a0a0;"></div>
<div class="a" style="left:0px;top:37px;width:2px;height:48px;background:#0078d4;"></div>
<svg class="a" style="left:12px;top:48px;" width="24" height="26" viewBox="0 0 24 26"><path d="M7.5,1.5 H15 L21.5,7.5 V17 Q21.5,18 20.5,18 H8.5 Q7.5,18 7.5,17 Z M15,1.5 V7.5 H21.5" fill="none" stroke="#d7d7d7" stroke-width="1.4" stroke-linejoin="round"/><path d="M7.5,7.5 H2.5 Q1.5,7.5 1.5,8.5 V23.5 Q1.5,24.5 2.5,24.5 H13 Q14,24.5 14,23.5 V18" fill="none" stroke="#d7d7d7" stroke-width="1.4"/></svg>
<div class="a" style="left:24px;top:61px;width:16px;height:16px;border-radius:50%;background:#0a78d0;box-shadow:0 0 0 1.5px #181818"></div>
<svg class="a" style="left:24px;top:61px;" width="16" height="16" viewBox="0 0 16 16"><path d="M6.2,5.6 L8.6,4.2 V11.8" fill="none" stroke="#ffffff" stroke-width="1.7" stroke-linejoin="round"/></svg>
<svg class="a" style="left:11px;top:93px;" width="26" height="28" viewBox="0 0 26 28"><circle cx="16" cy="11.5" r="7.8" fill="none" stroke="#858585" stroke-width="1.5"/><path d="M10.5,17 L2.5,25.5" stroke="#858585" stroke-width="1.6"/></svg>
<svg class="a" style="left:12px;top:143px;" width="24" height="28" viewBox="0 0 24 28"><circle cx="6.5" cy="5.5" r="2.6" fill="none" stroke="#858585" stroke-width="1.4"/><circle cx="17.3" cy="9.8" r="2.6" fill="none" stroke="#858585" stroke-width="1.4"/><circle cx="6.5" cy="22.3" r="2.6" fill="none" stroke="#858585" stroke-width="1.4"/><path d="M6.5,8.1 V19.7 M17.3,12.4 Q17.3,16 10,16.5 Q7,17 6.5,19.7" fill="none" stroke="#858585" stroke-width="1.4"/></svg>
<div class="a" style="left:25px;top:158px;width:14px;height:14px;border-radius:50%;background:#0c66b4;border:1.3px solid #e6f2ff;box-shadow:0 0 0 1.5px #181818, 0 0 2px 1px rgba(60,150,230,0.5)"></div>
<svg class="a" style="left:25px;top:158px;" width="14" height="14" viewBox="0 0 14 14"><path d="M7,3.5 V7.5 L9.8,9.8" fill="none" stroke="#e6f2ff" stroke-width="1.3"/></svg>
<svg class="a" style="left:8px;top:190px;" width="30" height="30" viewBox="0 0 30 30"><path d="M11.5,3.5 L28,13.5 L17.5,19.5" fill="none" stroke="#858585" stroke-width="1.4" stroke-linejoin="round"/><path d="M11.5,3.5 V13.5" stroke="#858585" stroke-width="1.4"/><ellipse cx="9.5" cy="21" rx="3.6" ry="4.6" fill="none" stroke="#858585" stroke-width="1.4"/><path d="M5.9,19 H13.1 M4,17 L6,18.5 M15,17 L13,18.5 M3.5,21.5 H5.9 M13.1,21.5 H15.5 M4,26 L6.3,24 M15,26 L12.7,24" stroke="#858585" stroke-width="1.2"/></svg>
<svg class="a" style="left:11px;top:240px;" width="26" height="26" viewBox="0 0 26 26"><path d="M1.7,6.9 H10.2 V15.4 H19 V24 H1.7 Z M1.7,15.4 H10.2 V24" fill="none" stroke="#858585" stroke-width="1.4"/><rect x="15.2" y="1.5" width="9.3" height="9.3" fill="none" stroke="#858585" stroke-width="1.4"/></svg>
<svg class="a" style="left:11px;top:288px;" width="26" height="26" viewBox="0 0 26 26"><circle cx="13" cy="13" r="11.5" fill="none" stroke="#858585" stroke-width="1.4"/><path d="M10,7 V20 M10,9 L16,15" stroke="#858585" stroke-width="1.5"/><circle cx="10" cy="7.5" r="1.6" fill="#858585"/><circle cx="10" cy="19.5" r="1.6" fill="#858585"/><circle cx="16.5" cy="17.5" r="3.8" fill="#181818" stroke="#858585" stroke-width="1.4"/></svg>
<svg class="a" style="left:11px;top:338px;" width="26" height="21" viewBox="0 0 26 21"><path d="M1,10 H21 Q22,8 24,8.3 Q25,9 23.5,11 Q22,18 12,19.5 Q4,20 1.5,13 Z" fill="#9a9a9a"/><g fill="#9a9a9a"><rect x="5" y="6.5" width="2.6" height="2.6"/><rect x="8.2" y="6.5" width="2.6" height="2.6"/><rect x="11.4" y="6.5" width="2.6" height="2.6"/><rect x="14.6" y="6.5" width="2.6" height="2.6"/><rect x="8.2" y="3.3" width="2.6" height="2.6"/><rect x="11.4" y="3.3" width="2.6" height="2.6"/><rect x="11.4" y="0.1" width="2.6" height="2.6"/></g></svg>
<svg class="a" style="left:11px;top:383px;" width="26" height="26" viewBox="0 0 26 26"><circle cx="13" cy="13" r="11.5" fill="none" stroke="#858585" stroke-width="1.5"/><path d="M10,7.5 V19 M10.5,8.5 L17,14.5" stroke="#858585" stroke-width="1.5"/><circle cx="10" cy="7.5" r="2" fill="#858585"/><circle cx="10" cy="19" r="2" fill="#858585"/><circle cx="17" cy="14.5" r="2" fill="#858585"/></svg>
<svg class="a" style="left:17px;top:430px;" width="14" height="30" viewBox="0 0 14 30"><path d="M7,0.5 Q13.5,7 12.5,15 Q11.5,22 7.6,25 L7.2,29.5 H6.8 L6.4,25 Q2.5,22 1.5,15 Q0.5,7 7,0.5 Z" fill="#8f8f8f"/><path d="M7,4 V26" stroke="#6a6a6a" stroke-width="0.8"/></svg>
<svg class="a" style="left:11px;top:615px;" width="26" height="26" viewBox="0 0 26 26"><circle cx="13" cy="13" r="11.5" fill="none" stroke="#858585" stroke-width="1.5"/><circle cx="13" cy="10" r="4.5" fill="none" stroke="#858585" stroke-width="1.5"/><path d="M5.5,21 Q7,15.8 13,15.8 Q19,15.8 20.5,21" fill="none" stroke="#858585" stroke-width="1.5"/></svg>
<svg class="a" style="left:11.5px;top:663.5px;" width="25" height="25" viewBox="0 0 25 25"><polygon points="20.55,9.47 23.87,10.20 23.87,14.80 20.55,15.53 20.33,16.05 22.17,18.91 18.91,22.17 16.05,20.33 15.53,20.55 14.80,23.87 10.20,23.87 9.47,20.55 8.95,20.33 6.09,22.17 2.83,18.91 4.67,16.05 4.45,15.53 1.13,14.80 1.13,10.20 4.45,9.47 4.67,8.95 2.83,6.09 6.09,2.83 8.95,4.67 9.47,4.45 10.20,1.13 14.80,1.13 15.53,4.45 16.05,4.67 18.91,2.83 22.17,6.09 20.33,8.95" fill="none" stroke="#858585" stroke-width="1.4" stroke-linejoin="round"/><circle cx="12.5" cy="12.5" r="3.2" fill="none" stroke="#858585" stroke-width="1.4"/></svg>
<div class="a" style="left:0px;top:700px;width:34px;height:22px;background:#0078d4;"></div>
<svg class="a" style="left:10px;top:703px;" width="14" height="16" viewBox="0 0 14 16"><path d="M1.8,5.8 L6.8,9.8 L1.8,13.8 M12.2,1.8 L7.2,5.8 L12.2,9.8" fill="none" stroke="#ffffff" stroke-width="1.4"/></svg>
<svg class="a" style="left:40px;top:704px;" width="14" height="15" viewBox="0 0 14 15"><circle cx="3.5" cy="2.8" r="2" fill="none" stroke="#cccccc" stroke-width="1.1"/><circle cx="3.5" cy="12.2" r="2" fill="none" stroke="#cccccc" stroke-width="1.1"/><circle cx="10.5" cy="5" r="2" fill="none" stroke="#cccccc" stroke-width="1.1"/><path d="M3.5,4.8 V10.2 M10.5,7 Q10.5,9.5 4,10.3" fill="none" stroke="#cccccc" stroke-width="1.1"/></svg>
<div class="t" style="left:57.50px;top:705.84px;font-size:12px;color:#cccccc;letter-spacing:0.026px;">master*</div>
<svg class="a" style="left:104px;top:705px;" width="15" height="12" viewBox="0 0 15 12"><path d="M4,10.5 Q0.8,10.5 0.8,7.5 Q0.8,4.8 3.5,4.6 Q4.5,1 8,1 Q11.5,1 12,4.6 Q14.2,5 14.2,7.7 Q14.2,10.5 11,10.5" fill="none" stroke="#cccccc" stroke-width="1.1"/><path d="M7.5,11.5 V5.5 M5,8 L7.5,5.5 L10,8" fill="none" stroke="#cccccc" stroke-width="1.1"/></svg>
<svg class="a" style="left:132px;top:704px;" width="14" height="15" viewBox="0 0 14 15"><circle cx="3" cy="2.5" r="1.8" fill="none" stroke="#cccccc" stroke-width="1.1"/><circle cx="3" cy="12.5" r="1.8" fill="none" stroke="#cccccc" stroke-width="1.1"/><circle cx="11" cy="2.5" r="1.8" fill="none" stroke="#cccccc" stroke-width="1.1"/><circle cx="11" cy="12.5" r="1.8" fill="none" stroke="#cccccc" stroke-width="1.1"/><path d="M3,4.3 V10.7 M11,4.3 V10.7 M5,9 H7.5 M6,7.5 L7.5,9 L6,10.5" fill="none" stroke="#cccccc" stroke-width="1.1"/></svg>
<svg class="a" style="left:161px;top:704px;" width="30" height="15" viewBox="0 0 30 15"><path d="M13,1 Q9,1.5 6,5 L3,8.5 L6.5,12 L10,9 Q13.5,6 14,2 Z M6,5 H2.5 L1,7 M10,9 V12.5 L8,14 M1,14 L4,11" fill="none" stroke="#cccccc" stroke-width="1.1"/><path d="M22,8.5 L26,4.5 M20,9 A2.2,2.2 0 1 0 20.1,9 M27,2 A2.2,2.2 0 1 0 27.1,2" fill="none" stroke="#cccccc" stroke-width="1.1"/><path d="M17,13.5 L21,9.5 M25,5 L29,1.5" stroke="#cccccc" stroke-width="1.1"/></svg>
<div class="t" style="left:194.00px;top:705.84px;font-size:12px;color:#cccccc;letter-spacing:-0.111px;">Launchpad</div>
<svg class="a" style="left:267px;top:704px;" width="15" height="15" viewBox="0 0 15 15"><circle cx="7.5" cy="7.5" r="6.3" fill="none" stroke="#cccccc" stroke-width="1.1"/><path d="M5,5 L10,10 M10,5 L5,10" stroke="#cccccc" stroke-width="1.1"/></svg>
<div class="t" style="left:284.50px;top:705.84px;font-size:12px;color:#cccccc;">0</div>
<svg class="a" style="left:294.5px;top:704px;" width="15" height="14" viewBox="0 0 15 14"><path d="M7.5,1 L14,13 H1 Z M7.5,5 V9.5 M7.5,10.5 V12" fill="none" stroke="#cccccc" stroke-width="1.1"/></svg>
<div class="t" style="left:311.50px;top:705.84px;font-size:12px;color:#cccccc;">3</div>
<svg class="a" style="left:335px;top:703.5px;" width="14" height="15" viewBox="0 0 14 15"><path d="M2.5,1.5 Q0.5,4 2.5,7 M11.5,1.5 Q13.5,4 11.5,7 M4.5,2.8 Q3.5,4 4.5,5.5 M9.5,2.8 Q10.5,4 9.5,5.5 M7,5 L4,14 M7,5 L10,14 M5,10.5 H9" fill="none" stroke="#cccccc" stroke-width="1.1"/><circle cx="7" cy="4.5" r="1" fill="#cccccc"/></svg>
<div class="t" style="left:351.50px;top:705.84px;font-size:12px;color:#cccccc;">0</div>
<div class="t" style="left:374.50px;top:705.84px;font-size:12px;color:#cccccc;letter-spacing:-0.338px;">{..} : Scanning..</div>
<svg class="a" style="left:470px;top:703.5px;" width="11" height="15" viewBox="0 0 11 15"><path d="M7,1 L2,8 H5.5 L4,14 L9.5,6.5 H6 Z" fill="none" stroke="#cccccc" stroke-width="1.1" stroke-linejoin="round"/></svg>
<div class="t" style="left:916.50px;top:705.84px;font-size:12px;color:#cccccc;letter-spacing:-0.241px;">Ln 12, Col 25</div>
<div class="t" style="left:1000.50px;top:705.84px;font-size:12px;color:#cccccc;letter-spacing:-0.547px;">Spaces: 3</div>
<div class="t" style="left:1065.50px;top:705.84px;font-size:12px;color:#cccccc;letter-spacing:-0.500px;">UTF-8</div>
<div class="t" style="left:1113.00px;top:705.84px;font-size:12px;color:#cccccc;letter-spacing:-2.516px;">LF</div>
<div class="t" style="left:1139.50px;top:705.84px;font-size:12px;color:#cccccc;letter-spacing:0.570px;">{ }</div>
<div class="t" style="left:1158.00px;top:705.84px;font-size:12px;color:#cccccc;letter-spacing:-1.844px;">CSS</div>
<svg class="a" style="left:1193px;top:704px;" width="13" height="14" viewBox="0 0 13 14"><circle cx="6.5" cy="6" r="5.2" fill="none" stroke="#cccccc" stroke-width="1.1"/><circle cx="6.5" cy="6" r="2.5" fill="none" stroke="#cccccc" stroke-width="1.1"/><path d="M6.5,6 V13.5" stroke="#cccccc" stroke-width="1.3"/></svg>
<div class="t" style="left:1210.00px;top:705.84px;font-size:12px;color:#cccccc;letter-spacing:-0.227px;">Go Live</div>
<svg class="a" style="left:1264px;top:705px;" width="16" height="12" viewBox="0 0 16 12"><path d="M1,6.5 L4,10 L10,1.5 M6,8.5 L7.5,10 L14,1.5" fill="none" stroke="#cccccc" stroke-width="1.1"/></svg>
<div class="t" style="left:1282.50px;top:705.84px;font-size:12px;color:#cccccc;letter-spacing:0.116px;">Prettier</div>
<svg class="a" style="left:1336px;top:704px;" width="14" height="14" viewBox="0 0 14 14"><path d="M2,11 Q3.5,9.5 3.5,6 Q3.5,1.5 7,1.5 Q10.5,1.5 10.5,6 Q10.5,9.5 12,11 Z M5.5,12.5 Q7,14 8.5,12.5" fill="none" stroke="#cccccc" stroke-width="1.1" stroke-linejoin="round"/></svg>
<div class="a" style="left:1180px;top:0;width:164px;height:54px;background:#ffffff"></div>
<svg class="a" style="left:1199px;top:9px;" width="40" height="38" viewBox="0 0 40 38"><path d="M2.3,36.6 V3.6 Q2.3,1.4 4.5,1.4 H34 Q36.7,1.4 36.7,4.2 V32.6 Q36.7,35.4 34,35.4 H19.2 V1.4 M2.3,18.9 H36.7" fill="none" stroke="#2a9fdb" stroke-width="2.4"/></svg>
<div class="t" style="left:1252px;top:16.8px;font-size:18px;color:#3f9ed8;letter-spacing:0.6px;-webkit-text-stroke:0">mern<span style="color:#eec260">fa</span><span style="color:#1c1c1c">.ir</span></div>
<div class="a" style="left:615px;top:225.5px;width:59px;height:59px;border-radius:50%;background:#7b7614"></div>
<svg class="a" style="left:642px;top:248px;" width="8" height="16" viewBox="0 0 8 16"><path d="M1.5,0.8 Q4,0.8 4,2.5 Q4,0.8 6.5,0.8 M4,2.5 V13.5 M1.5,15.2 Q4,15.2 4,13.5 Q4,15.2 6.5,15.2" fill="none" stroke="#e8e8e8" stroke-width="1"/></svg>
</body></html>
